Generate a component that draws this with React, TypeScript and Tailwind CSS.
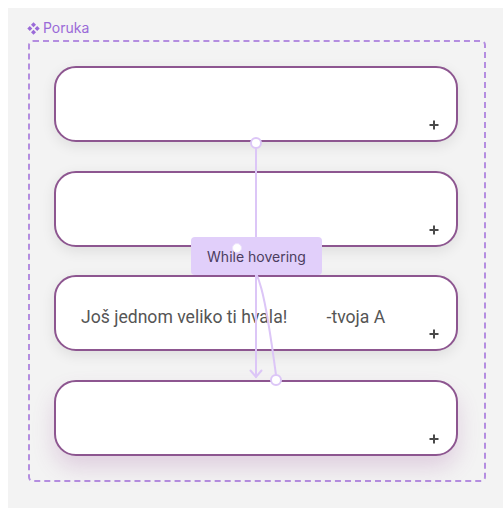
import React from "react";

const PlusIcon = () => (
  <svg width="10" height="10" viewBox="0 0 10 10" className="absolute right-[17px] bottom-[10px]">
    <path d="M5 0.5V9.5M0.5 5H9.5" stroke="#4a4a4a" strokeWidth="2" />
  </svg>
);

const ComponentIcon = () => (
  <svg width="13" height="13" viewBox="0 0 12 12" className="mr-[3px]">
    <g fill="#9a6ad8">
      <path d="M6 0.3L8.3 2.6L6 4.9L3.7 2.6Z" />
      <path d="M6 7.1L8.3 9.4L6 11.7L3.7 9.4Z" />
      <path d="M2.6 3.7L4.9 6L2.6 8.3L0.3 6Z" />
      <path d="M9.4 3.7L11.7 6L9.4 8.3L7.1 6Z" />
    </g>
  </svg>
);

type CardProps = { text?: string; last?: boolean };

function Card({ text, last }: CardProps) {
  return (
    <div
      className={
        "relative h-[76px] w-[404px] rounded-[22px] border-2 border-[#8d5690] bg-white flex items-center pl-[25px] pt-[7px] " +
        (last
          ? "shadow-[0_12px_22px_rgba(150,70,150,0.2)]"
          : "shadow-[0_4px_14px_rgba(0,0,0,0.09)]")
      }
    >
      {text && (
        <span className="whitespace-pre text-[17.6px] text-[#555555] font-['Roboto',sans-serif]">
          {text}
        </span>
      )}
      <PlusIcon />
    </div>
  );
}

export default function App() {
  return (
    <div className="w-[503px] h-[508px] bg-white pt-2 pl-2 font-['Inter',sans-serif]">
      <div className="h-full bg-[#f3f3f3] pt-[12px] pl-[19px]">
        <div className="flex items-center h-4 text-[14px] leading-4 text-[#9a6ad8]">
          <ComponentIcon />
          <span>Poruka</span>
        </div>

        <div className="relative mt-1 ml-px w-[458px] h-[442px] rounded-[5px] border-2 border-dashed border-[#b48de0] pl-6 pt-6">
          <div className="flex flex-col gap-[28.67px]">
            <Card />
            <Card />
            <Card text="Još jednom veliko ti hvala!         -tvoja A" />
            <Card last />
          </div>

          {/* prototype connections */}
          <svg className="absolute left-0 top-0 pointer-events-none" width="454" height="438" viewBox="30 42 454 438">
            <g fill="none" stroke="#dcc6f7" strokeWidth="2" strokeLinecap="round">
              <path d="M256 148V377" />
              <path d="M250.5 370.5L256 377L261.5 370.5" />
              <path d="M237 248C260 262 266 300 276 375" />
            </g>
            <circle cx="256" cy="143" r="5" fill="white" stroke="#dcc6f7" strokeWidth="2" />
            <circle cx="276" cy="380" r="5" fill="white" stroke="#dcc6f7" strokeWidth="2" />
          </svg>

          <div className="absolute left-[161px] top-[195px] w-[131px] h-[38px] rounded-[4px] bg-[#e1cffa] flex items-center justify-center text-[14px] text-[#4b3d5e]">
            While hovering
          </div>
          <div className="absolute left-[202px] top-[201px] w-[10px] h-[10px] rounded-full bg-white border border-[#ece2fb]" />
        </div>
      </div>
    </div>
  );
}
